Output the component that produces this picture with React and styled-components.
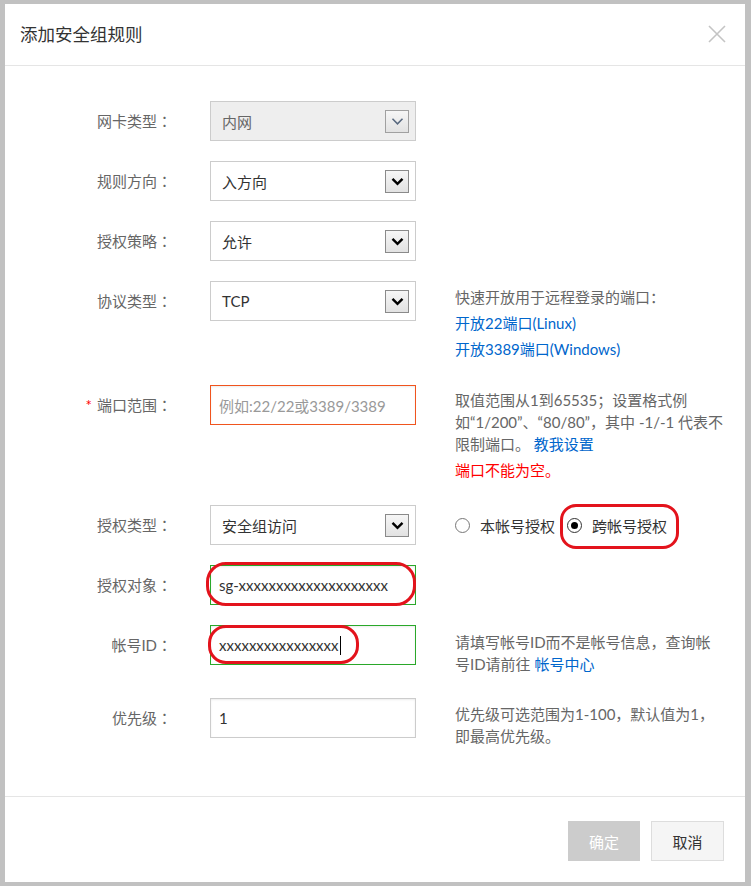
import React from "react";
import styled, { createGlobalStyle } from "styled-components";

const GlobalStyle = createGlobalStyle`
  html, body { margin: 0; padding: 0; background: #c1c1c1; }
  body {
    font-family: "Lato", "Noto Sans CJK SC", sans-serif;
    font-size: 15px;
    color: #333;
  }
  * { box-sizing: border-box; }
`;

const Page = styled.div`
  padding: 4px 6px 4px 5px;
  height: 886px;
`;

const Modal = styled.div`
  width: 740px;
  height: 878px;
  background: #fff;
  display: flex;
  flex-direction: column;
`;

const Header = styled.div`
  height: 62px;
  flex: none;
  border-bottom: 1px solid #e5e5e5;
  display: flex;
  align-items: center;
  justify-content: space-between;
  padding: 0 19px 2px 15px;
`;

const Title = styled.div`
  font-size: 17.5px;
  color: #333;
`;

const Close = styled.svg`
  width: 18px;
  height: 18px;
  display: block;
`;

const Body = styled.div`
  flex: 1;
  padding-top: 35px;
`;

const Row = styled.div`
  display: flex;
  align-items: flex-start;
  margin-bottom: ${(p) => p.$mb}px;
`;

const Label = styled.div`
  width: 205px;
  padding-right: 38px;
  text-align: right;
  line-height: 40px;
  color: #666;
  white-space: nowrap;
`;

const Colon = styled.span`
  font-family: "Noto Sans CJK TC", sans-serif;
`;

const Star = styled.span`
  color: #f00;
  margin-right: 5px;
`;

const Control = styled.div`
  position: relative;
  width: 206px;
  flex: none;
`;

const SelectBox = styled.div`
  height: 40px;
  border: 1px solid #ccc;
  background: ${(p) => (p.$disabled ? "#eee" : "#fff")};
  color: ${(p) => (p.$disabled ? "#666" : "#333")};
  display: flex;
  align-items: center;
  justify-content: space-between;
  padding: 0 6px 0 11px;
`;

const ArrowBox = styled.div`
  width: 24px;
  height: 23px;
  border: 1px solid ${(p) => (p.$disabled ? "#a0a0a0" : "#8a8a8a")};
  background: linear-gradient(#f6f6f6, #e2e2e2);
  display: flex;
  align-items: center;
  justify-content: center;
`;

const Field = styled.div`
  height: 40px;
  border: 1px solid
    ${(p) => (p.$state === "error" ? "#f0541e" : p.$state === "success" ? "#2aa82a" : "#ccc")};
  box-shadow: inset 0 1px 2px rgba(0, 0, 0, 0.08);
  display: flex;
  align-items: center;
  padding-left: 8px;
  color: ${(p) => (p.$placeholder ? "#999" : "#333")};
  white-space: nowrap;
  overflow: hidden;
`;

const Caret = styled.span`
  display: inline-block;
  width: 1px;
  height: 19px;
  background: #000;
  margin-left: 1px;
`;

const Help = styled.div`
  margin-left: 39px;
  width: 275px;
  color: #666;
  line-height: ${(p) => p.$lh || 22}px;
  padding-top: ${(p) => p.$pt || 0}px;
  padding-bottom: ${(p) => p.$pb || 0}px;
`;

const Link = styled.a`
  color: #0066cc;
  text-decoration: none;
`;

const ErrorText = styled.div`
  color: #f00;
  margin-top: 4px;
`;

const RadioGroup = styled.div`
  margin-left: 39px;
  height: 40px;
  display: flex;
  align-items: center;
  gap: 12px;
`;

const RadioOption = styled.label`
  position: relative;
  display: flex;
  align-items: center;
  gap: 10px;
  color: #333;
  height: 40px;
`;

const RadioCircle = styled.span`
  width: 15px;
  height: 15px;
  border-radius: 50%;
  border: 1px solid ${(p) => (p.$checked ? "#333" : "#777")};
  background: #fff;
  display: flex;
  align-items: center;
  justify-content: center;
  &::after {
    content: "";
    width: 7px;
    height: 7px;
    border-radius: 50%;
    background: ${(p) => (p.$checked ? "#000" : "transparent")};
  }
`;

const Annot = styled.span`
  position: absolute;
  top: ${(p) => p.$top}px;
  left: ${(p) => p.$left}px;
  width: ${(p) => p.$w}px;
  height: ${(p) => p.$h}px;
  border: 3px solid #e3131c;
  border-radius: ${(p) => p.$r || 18}px;
  pointer-events: none;
`;

const Footer = styled.div`
  flex: none;
  border-top: 1px solid #e5e5e5;
  padding: 24px 21px 21px;
  display: flex;
  justify-content: flex-end;
  gap: 11px;
`;

const Button = styled.button`
  height: 40px;
  width: ${(p) => (p.$primary ? 72 : 73)}px;
  border: ${(p) => (p.$primary ? "none" : "1px solid #ddd")};
  background: ${(p) => (p.$primary ? "#ccc" : "#f5f5f5")};
  color: ${(p) => (p.$primary ? "#fff" : "#333")};
  font-family: inherit;
  font-size: 15px;
  padding: 0;
  cursor: pointer;
`;

function Chevron({ disabled }) {
  return (
    <svg width="13" height="9" viewBox="0 0 13 9">
      <path
        d="M1.5 1.8 L6.5 6.8 L11.5 1.8"
        fill="none"
        stroke={disabled ? "#5a6a80" : "#000"}
        strokeWidth={disabled ? 1.6 : 2.4}
      />
    </svg>
  );
}

function Select({ value, disabled }) {
  return (
    <SelectBox $disabled={disabled}>
      <span>{value}</span>
      <ArrowBox $disabled={disabled}>
        <Chevron disabled={disabled} />
      </ArrowBox>
    </SelectBox>
  );
}

function FormLabel({ children, required }) {
  return (
    <Label>
      {required && <Star>*</Star>}
      {children}
      <Colon>：</Colon>
    </Label>
  );
}

export default function App() {
  return (
    <>
      <GlobalStyle />
      <Page>
        <Modal>
          <Header>
            <Title>添加安全组规则</Title>
            <Close viewBox="0 0 18 18">
              <path d="M1 1 L17 17 M17 1 L1 17" stroke="#c4c4c4" strokeWidth="1.6" />
            </Close>
          </Header>
          <Body>
            <Row $mb={20}>
              <FormLabel>网卡类型</FormLabel>
              <Control>
                <Select value="内网" disabled />
              </Control>
            </Row>
            <Row $mb={20}>
              <FormLabel>规则方向</FormLabel>
              <Control>
                <Select value="入方向" />
              </Control>
            </Row>
            <Row $mb={20}>
              <FormLabel>授权策略</FormLabel>
              <Control>
                <Select value="允许" />
              </Control>
            </Row>
            <Row $mb={20}>
              <FormLabel>协议类型</FormLabel>
              <Control>
                <Select value="TCP" />
              </Control>
              <Help $lh={26} $pt={3} $pb={3}>
                快速开放用于远程登录的端口：
                <br />
                <Link>开放22端口(Linux)</Link>
                <br />
                <Link>开放3389端口(Windows)</Link>
              </Help>
            </Row>
            <Row $mb={24}>
              <FormLabel required>端口范围</FormLabel>
              <Control>
                <Field $state="error" $placeholder>
                  例如:22/22或3389/3389
                </Field>
              </Control>
              <Help $lh={22} $pt={4}>
                取值范围从1到65535；设置格式例
                <br />
                如“1/200”、“80/80”，其中 -1/-1 代表不
                <br />
                限制端口。 <Link>教我设置</Link>
                <ErrorText>端口不能为空。</ErrorText>
              </Help>
            </Row>
            <Row $mb={20}>
              <FormLabel>授权类型</FormLabel>
              <Control>
                <Select value="安全组访问" />
              </Control>
              <RadioGroup>
                <RadioOption>
                  <RadioCircle />
                  本帐号授权
                </RadioOption>
                <RadioOption>
                  <RadioCircle $checked />
                  跨帐号授权
                  <Annot $top={-1} $left={-7} $w={119} $h={45} $r={16} />
                </RadioOption>
              </RadioGroup>
            </Row>
            <Row $mb={20}>
              <FormLabel>授权对象</FormLabel>
              <Control>
                <Field $state="success">sg-xxxxxxxxxxxxxxxxxxxx</Field>
                <Annot $top={-3} $left={-4} $w={210} $h={44} $r={20} />
              </Control>
            </Row>
            <Row $mb={23}>
              <FormLabel>帐号ID</FormLabel>
              <Control>
                <Field $state="success">
                  xxxxxxxxxxxxxxxx
                  <Caret />
                </Field>
                <Annot $top={0} $left={-2} $w={151} $h={39} $r={18} />
              </Control>
              <Help $lh={22} $pt={6}>
                请填写帐号ID而不是帐号信息，查询帐
                <br />
                号ID请前往 <Link>帐号中心</Link>
              </Help>
            </Row>
            <Row $mb={0}>
              <FormLabel>优先级</FormLabel>
              <Control>
                <Field>1</Field>
              </Control>
              <Help $lh={22} $pt={5}>
                优先级可选范围为1-100，默认值为1，
                <br />
                即最高优先级。
              </Help>
            </Row>
          </Body>
          <Footer>
            <Button $primary>确定</Button>
            <Button>取消</Button>
          </Footer>
        </Modal>
      </Page>
    </>
  );
}
